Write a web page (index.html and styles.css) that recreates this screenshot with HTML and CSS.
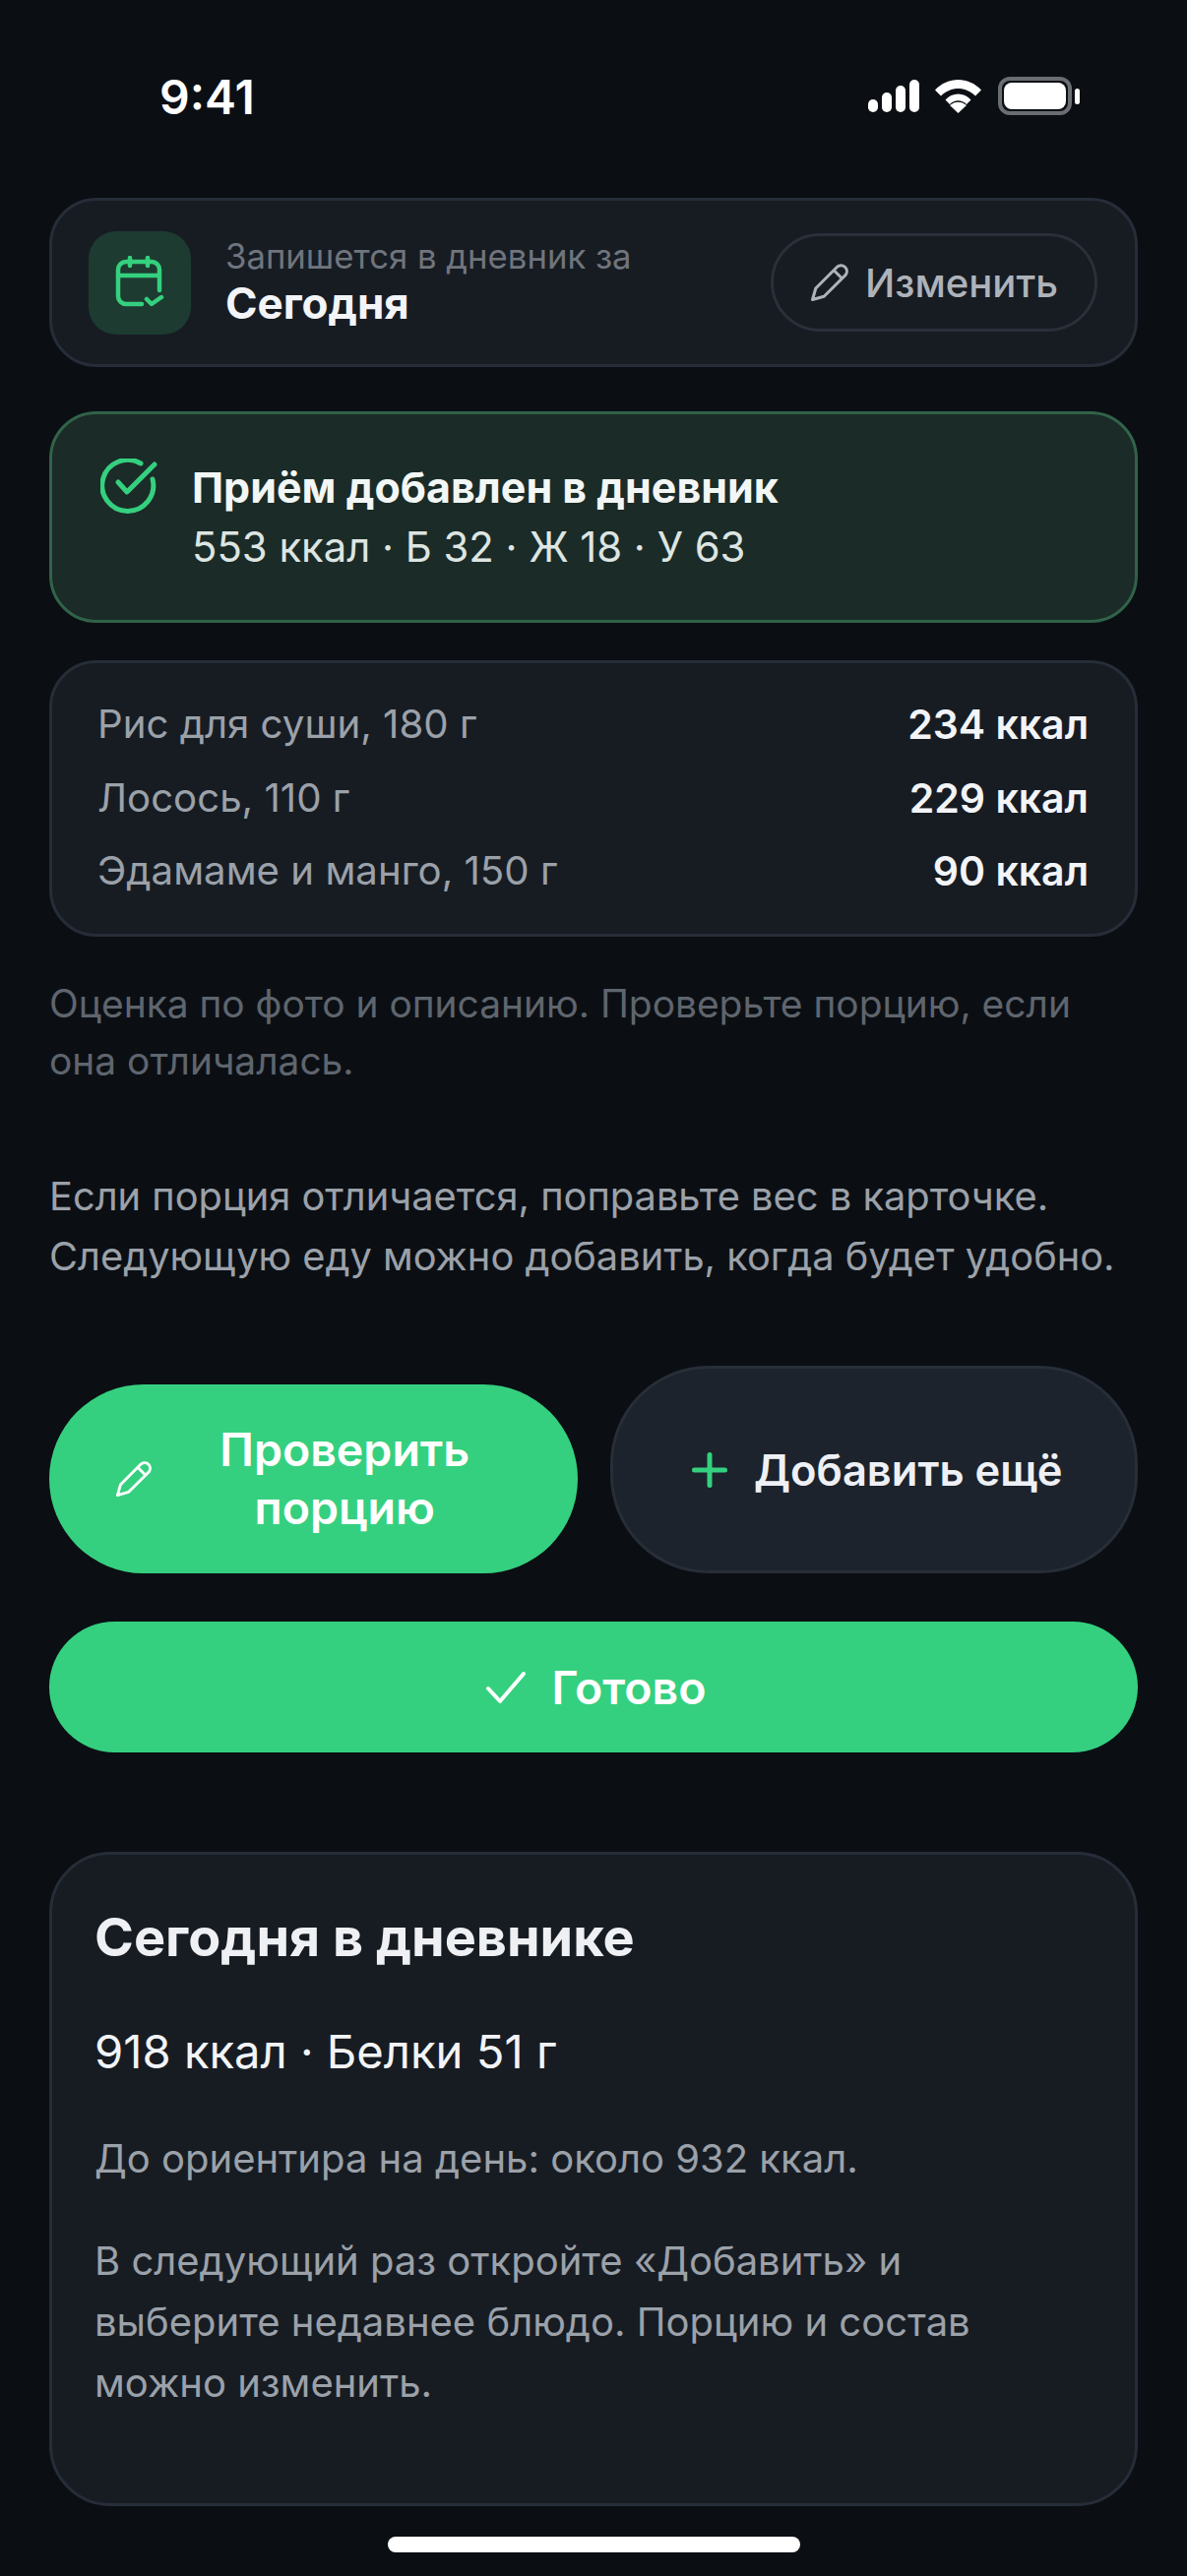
FILE: index.html
```html
<!DOCTYPE html>
<html lang="ru">
<head>
  <meta charset="UTF-8">
  <meta name="viewport" content="width=device-width, initial-scale=1.0">
  <title>Приём добавлен</title>
  <link rel="stylesheet" href="styles.css">
</head>
<body>

  <div class="status-bar">
    <span class="time">9:41</span>
    <div class="status-icons">
      <svg width="52" height="33" viewBox="0 0 52 33" fill="#fff">
        <rect x="0" y="20" width="10" height="13" rx="5"/>
        <rect x="14" y="13" width="10" height="20" rx="5"/>
        <rect x="28" y="6" width="10" height="27" rx="5"/>
        <rect x="42" y="0" width="10" height="33" rx="5"/>
      </svg>
      <svg width="47" height="34" viewBox="0 0 47 34" fill="#fff">
        <path d="M0 10.500C13 -3.500 34 -3.500 47 10.500L41 16.500C31 6.500 16 6.500 6 16.500Z"/>
        <path d="M10.500 20.500C17 12.500 30 12.500 36.500 20.500L32 25C27 20 20 20 15 25Z"/>
        <path d="M15 26C20 21.500 27 21.500 32 26L23.500 34Z"/>
      </svg>
      <div class="battery"><div class="battery-fill"></div></div>
      <div class="battery-tip"></div>
    </div>
  </div>

  <div class="card date-card">
    <div class="date-tile">
      <svg width="50" height="54" viewBox="0 0 50 54" fill="none" stroke="#35d07f" stroke-width="4.500" stroke-linecap="round" stroke-linejoin="round">
        <path d="M27 49H11a8 8 0 0 1-8-8V14a8 8 0 0 1 8-8h26a8 8 0 0 1 8 8v21"/>
        <path d="M3 20H45"/>
        <path d="M15 2V10"/>
        <path d="M33 2V10"/>
        <path d="M32 44l5 5 10-7"/>
      </svg>
    </div>
    <div class="date-text">
      <div class="date-label">Запишется в дневник за</div>
      <div class="date-value">Сегодня</div>
    </div>
    <button class="edit-button">
      <svg width="40" height="40" viewBox="0 0 40 40" fill="none" stroke="#aeb3ba" stroke-width="3" stroke-linejoin="round">
        <path d="M2.500 37.500L5.800 26L27.800 4a6 6 0 0 1 8.400 8.400L14.200 34.200Z"/>
        <path d="M24 7.500L32.500 16"/>
      </svg>
      Изменить
    </button>
  </div>

  <div class="card success-card">
    <svg class="success-icon" width="58" height="58" viewBox="0 0 58 58" fill="none" stroke="#35d07f" stroke-width="5" stroke-linecap="round" stroke-linejoin="round">
      <path d="M53 21A26 26 0 1 1 41 5"/>
      <path d="M18 24l9 10L55 6"/>
    </svg>
    <div>
      <div class="success-title">Приём добавлен в дневник</div>
      <div class="success-text">553 ккал · Б 32 · Ж 18 · У 63</div>
    </div>
  </div>

  <div class="card items-card">
    <div class="item"><span>Рис для суши, 180 г</span><b>234 ккал</b></div>
    <div class="item"><span>Лосось, 110 г</span><b>229 ккал</b></div>
    <div class="item"><span>Эдамаме и манго, 150 г</span><b>90 ккал</b></div>
  </div>

  <p class="note">Оценка по фото и описанию. Проверьте порцию, если она отличалась.</p>

  <p class="hint">Если порция отличается, поправьте вес в карточке. Следующую еду можно добавить, когда будет удобно.</p>

  <div class="button-row">
    <button class="btn btn-green btn-check">
      <svg width="38" height="38" viewBox="0 0 40 40" fill="none" stroke="#fff" stroke-width="3" stroke-linejoin="round">
        <path d="M2.500 37.500L5.800 26L27.800 4a6 6 0 0 1 8.400 8.400L14.200 34.200Z"/>
        <path d="M24 7.500L32.500 16"/>
      </svg>
      <span class="btn-check-label">Проверить порцию</span>
    </button>
    <button class="btn btn-dark">
      <svg width="36" height="36" viewBox="0 0 36 36" fill="none" stroke="#35d07f" stroke-width="5" stroke-linecap="round">
        <path d="M18 2.500V33.500"/>
        <path d="M2.500 18H33.500"/>
      </svg>
      Добавить ещё
    </button>
  </div>

  <button class="btn btn-green btn-done">
    <svg width="40" height="34" viewBox="0 0 40 34" fill="none" stroke="#fff" stroke-width="4" stroke-linecap="round" stroke-linejoin="round">
      <path d="M2 18l12 13L38 3"/>
    </svg>
    Готово
  </button>

  <div class="card today-card">
    <h2>Сегодня в дневнике</h2>
    <div class="today-total">918 ккал · Белки 51 г</div>
    <p class="today-goal">До ориентира на день: около 932 ккал.</p>
    <p class="today-next">В следующий раз откройте «Добавить» и выберите недавнее блюдо. Порцию и состав можно изменить.</p>
  </div>

  <div class="home-indicator"></div>

</body>
</html>
```

FILE: styles.css
```css
body {
  font-family: Inter, "Noto Sans", sans-serif;
  background-color: #0b0f14;
  color: #f2f4f7;
  margin: 0;
  padding: 0 50px;
  height: 2618px;
  overflow: hidden;
  box-sizing: border-box;
}

.status-bar {
  height: 201px;
  display: flex;
  justify-content: space-between;
  align-items: flex-start;
  padding: 69px 59px 0 112px;
  box-sizing: border-box;
}

.time {
  font-size: 48px;
  line-height: 60px;
  font-weight: 600;
  color: #fff;
}

.status-icons {
  display: flex;
  align-items: center;
  gap: 16px;
  padding: 9px 0 0;
}

.battery {
  width: 63px;
  height: 27px;
  border: 4px solid #6a6d72;
  border-radius: 12px;
  padding: 2px;
  box-sizing: content-box;
  margin-left: 1px;
}

.battery-fill {
  width: 100%;
  height: 100%;
  background-color: #fff;
  border-radius: 8px;
}

.battery-tip {
  width: 5px;
  height: 16px;
  background-color: #fff;
  border-radius: 3px;
  margin-left: -13px;
}

.card {
  background-color: #171c23;
  border: 3px solid #272d38;
  border-radius: 48px;
  box-sizing: border-box;
}

.date-card {
  height: 172px;
  display: flex;
  align-items: center;
  padding: 0 38px 0 37px;
}

.date-tile {
  width: 104px;
  height: 105px;
  border-radius: 28px;
  background-color: #1d3b30;
  display: flex;
  align-items: center;
  justify-content: center;
  flex-shrink: 0;
}

.date-text {
  flex: 1;
  margin-left: 35px;
}

.date-label {
  font-size: 34.700px;
  line-height: 42px;
  color: #70757d;
}

.date-value {
  font-size: 44px;
  line-height: 54px;
  font-weight: 700;
  color: #f2f4f7;
}

.edit-button {
  height: 100px;
  width: 332px;
  border: 3px solid #2a303a;
  border-radius: 50px;
  background: none;
  color: #aeb3ba;
  font-family: inherit;
  font-size: 40px;
  font-weight: 500;
  display: flex;
  align-items: center;
  justify-content: center;
  gap: 16px;
  padding: 0;
}

.success-card {
  margin-top: 45px;
  height: 215px;
  background-color: #1b2b28;
  border-color: #316349;
  display: flex;
  align-items: flex-start;
  padding: 45px 0 0 49px;
}

.success-icon {
  flex-shrink: 0;
  margin-right: 35px;
}

.success-title {
  font-size: 43px;
  line-height: 62px;
  font-weight: 700;
  color: #f2f6f4;
  margin-top: -2px;
}

.success-text {
  font-size: 41.800px;
  line-height: 61px;
  color: #dde5e2;
}

.items-card {
  margin-top: 38px;
  height: 281px;
  padding: 25px 47px 0 46px;
}

.item {
  display: flex;
  justify-content: space-between;
  font-size: 40.200px;
  line-height: 74.500px;
  color: #9ba1a9;
}

.item b {
  font-size: 41px;
  font-weight: 600;
  color: #f2f4f7;
}

.note {
  margin: 39px 0 0;
  font-size: 38.900px;
  line-height: 58px;
  color: #5f656e;
}

.hint {
  margin: 78px 0 0;
  font-size: 39.800px;
  line-height: 61px;
  color: #9ba1a9;
}

.button-row {
  margin-top: 81px;
  display: grid;
  grid-template-columns: 1fr 1fr;
  align-items: end;
  gap: 33px;
}

.btn {
  border: none;
  border-radius: 100px;
  font-family: inherit;
  font-size: 46.500px;
  font-weight: 600;
  display: flex;
  align-items: center;
  justify-content: center;
  padding: 0;
  box-sizing: border-box;
}

.btn-green {
  background-color: #35d07f;
  color: #fff;
}

.btn-dark {
  height: 211px;
  background-color: #1c232c;
  border: 3px solid #272e38;
  color: #eef0f5;
  font-size: 43.500px;
  gap: 27px;
  padding-left: 7px;
}

.btn-check {
  height: 192px;
  gap: 60px;
  padding-right: 34px;
  line-height: 59px;
}

.btn-check-label {
  width: 270px;
  text-align: center;
}

.btn-done {
  margin-top: 49px;
  width: 100%;
  height: 133px;
  gap: 27px;
  padding-left: 5px;
}

.today-card {
  margin-top: 101px;
  height: 665px;
  border-radius: 62px;
  padding: 49px 44px 0 43px;
}

.today-card h2 {
  margin: 0;
  font-size: 54px;
  line-height: 70px;
  font-weight: 700;
  color: #eef0f3;
}

.today-total {
  margin-top: 51px;
  font-size: 47.200px;
  line-height: 60px;
  color: #f2f4f7;
}

.today-goal {
  margin: 51px 0 0;
  font-size: 40px;
  line-height: 56px;
  color: #9ba1a9;
}

.today-next {
  margin: 45px 0 0;
  font-size: 40px;
  line-height: 62px;
  color: #9ba1a9;
}

.home-indicator {
  width: 419px;
  height: 16px;
  margin: 31px auto 0;
  background-color: #fff;
  border-radius: 8px;
}
```
